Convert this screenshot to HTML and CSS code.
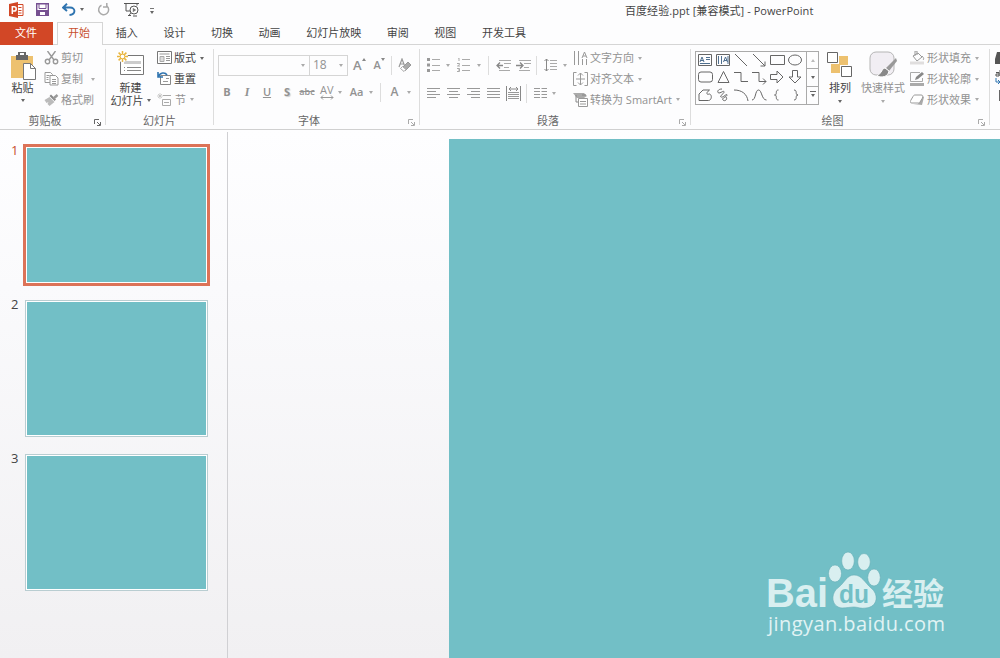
FILE: index.html
```html
<!DOCTYPE html>
<html lang="zh-CN">
<head>
	<meta charset="UTF-8">
	<title>百度经验.ppt [兼容模式] - PowerPoint</title>
	<link rel="stylesheet" href="styles.css">
</head>
<body>
<div class="app">
	<!-- 标题栏 -->
	<div class="titlebar">
		<div class="quick">
			<svg class="logo" width="15" height="16" viewBox="0 0 15 16"><path d="M8 2.500h6v11H8" fill="#fff" stroke="#d24726"/><path d="M9.500 5.500h3M9.500 8.500h3M9.500 11h3" stroke="#d24726"/><path d="M0 2l9-2v16l-9-2z" fill="#d24726"/><path d="M3.300 12V4.800h1.800a2 2 0 0 1 0 4.200H3.500" fill="none" stroke="#fff" stroke-width="1.500"/></svg>
			<svg class="save" width="13" height="13" viewBox="0 0 13 13"><path d="M.7.7h11.600v11.600H.7z" fill="#fff" stroke="#765091" stroke-width="1.400"/><path d="M.7 7h11.600v5.300H.7z" fill="#765091"/><path d="M3 .5v5h7v-5" fill="none" stroke="#765091"/><path d="M4 9h5v3H4z" fill="#fff"/></svg>
			<svg class="undo" width="14" height="13" viewBox="0 0 14 13"><path d="M5 .8L1 4.500 5 8M1.500 4.500H8c6 0 6 7-.5 7.500" fill="none" stroke="#2f74b0" stroke-width="1.900"/></svg>
			<i class="caret dark"></i>
			<svg class="redo" width="13" height="13" viewBox="0 0 13 13"><path d="M4.500 2.200A5 5 0 1 0 10 3M9.800 0v4H6" fill="none" stroke="#aaa" stroke-width="1.500"/></svg>
			<svg class="show" width="16" height="15" viewBox="0 0 16 15"><path d="M0 1.500h15M2 1.500V9h4M5 13.500l2-3M4 13.500h3M13 1.500v2" fill="none" stroke="#555"/><circle cx="10" cy="8" r="4" fill="#fff" stroke="#555"/><path d="M8.800 5.800v4.400L12.200 8z" fill="#777"/><path d="M9 14h4" stroke="#555"/></svg>
			<span class="more"><i class="caret dark"></i></span>
		</div>
		<div class="title">百度经验.ppt [兼容模式] - PowerPoint</div>
	</div>

	<!-- 选项卡 -->
	<div class="tabs">
		<span class="tab file">文件</span>
		<span class="tab current">开始</span>
		<span class="tab">插入</span>
		<span class="tab">设计</span>
		<span class="tab">切换</span>
		<span class="tab">动画</span>
		<span class="tab">幻灯片放映</span>
		<span class="tab">审阅</span>
		<span class="tab">视图</span>
		<span class="tab">开发工具</span>
	</div>

	<!-- 功能区 -->
	<div class="ribbon">
		<div class="group clipboard">
			<div class="group-body">
				<div class="big paste">
					<svg width="26" height="29" viewBox="0 0 26 29"><path d="M0 4h22v22H0z" fill="#edc16f"/><path d="M5 3h12v5H5z" fill="#666"/><path d="M8 3V0h6v3" fill="none" stroke="#666" stroke-width="2"/><path d="M12.500 11.500h7l5 5v11h-12z" fill="#fff" stroke="#777"/><path d="M19.500 11.500v5h5" fill="none" stroke="#777"/></svg>
					<span>粘贴</span>
					<i class="caret dark"></i>
				</div>
				<div class="list">
					<div class="cmd off"><svg width="14" height="14" viewBox="0 0 14 14"><g fill="none" stroke="#999" stroke-width="1.400"><path d="M3 0l6.500 9M11 0L4.500 9"/><circle cx="3" cy="10.500" r="2.200"/><circle cx="11" cy="10.500" r="2.200"/></g></svg><span>剪切</span></div>
					<div class="cmd off"><svg width="14" height="14" viewBox="0 0 14 14"><g fill="#fff" stroke="#999"><path d="M.5.5H6l2 2v8H.5z"/><path d="M5.500 3.500H11l2.500 2.500v7h-8z"/><path d="M2 3.500h3M2 5.500h2M2 7.500h2M7.500 7.500h4M7.500 9.500h4M7.500 11.500h4"/></g></svg><span>复制</span><i class="caret far"></i></div>
					<div class="cmd off"><svg width="14" height="14" viewBox="0 0 14 14"><path d="M0 7l5-3 5 5-5 4-2-2 1-2-2 1z" fill="#bbb"/><path d="M5 3l5 5 1.500-1.500-5-5z" fill="#888"/><path d="M9 5.500L13 2" stroke="#999" stroke-width="2.500"/></svg><span>格式刷</span></div>
				</div>
			</div>
			<div class="group-name">剪贴板<svg class="launch dark" width="7" height="7" viewBox="0 0 7 7"><path d="M.5 5V.5H5M3 3l3 3M6.500 3v3.500H3"/></svg></div>
		</div>

		<div class="group slides">
			<div class="group-body">
				<div class="big newslide">
					<svg width="28" height="25" viewBox="0 0 28 25"><path d="M3.500 4.500h23v19h-23z" fill="#fff" stroke="#777"/><path d="M7 10h17v3H7z" fill="#ccc"/><path d="M7 16.500h1M10 16.500h14M7 19.500h1M10 19.500h14" stroke="#888"/><circle cx="5.500" cy="5.500" r="5.500" fill="#fff"/><path d="M5.500 0v11M0 5.500h11M1.600 1.600l7.800 7.800M9.400 1.600L1.600 9.400" stroke="#e9b53f" stroke-width="1.500"/><circle cx="5.500" cy="5.500" r="2.300" fill="#fff" stroke="#e9b53f"/></svg>
					<span>新建</span>
					<span>幻灯片<i class="caret dark"></i></span>
				</div>
				<div class="list">
					<div class="cmd"><svg width="15" height="14" viewBox="0 0 15 14"><path d="M.5.5h14v12H.5z" fill="#fff" stroke="#777"/><path d="M2.500 3h10" stroke="#999"/><path d="M3 5.500h4v5H3z" fill="#ddd" stroke="#aaa"/><path d="M9 5.500h4M9 7.500h4M9 9.500h4" stroke="#999"/></svg><span>版式</span><i class="caret dark"></i></div>
					<div class="cmd"><svg width="15" height="14" viewBox="0 0 15 14"><path d="M3.500 3.500h10v9h-10z" fill="#fff" stroke="#888"/><path d="M6 9.500h5M9 6.500h3" stroke="#999"/><path d="M1 0v5h5M1.500 4.500C3 .5 8-.2 10 3" fill="none" stroke="#2f74b0" stroke-width="1.600"/></svg><span>重置</span></div>
					<div class="cmd off"><svg width="15" height="14" viewBox="0 0 15 14"><path d="M3 0v6M0 3h6M1 1l4 4M5 1L1 5" stroke="#bbb" stroke-width=".7"/><path d="M6 2.500h8M5.500 6.500h8v6h-8zM7 9.500h5" fill="none" stroke="#aaa"/></svg><span class="sec">节</span><i class="caret"></i></div>
				</div>
			</div>
			<div class="group-name">幻灯片</div>
		</div>

		<div class="group font">
			<div class="group-body rows">
				<div class="font-top">
					<div class="combo"><i class="caret"></i></div>
					<div class="combo size">18<i class="caret"></i></div>
					<b class="grow">A<svg width="4" height="3" viewBox="0 0 4 3"><path d="M0 3l2-3 2 3z" fill="#888"/></svg></b>
					<b class="shrink">A<svg width="4" height="3" viewBox="0 0 4 3"><path d="M0 0l2 3 2-3z" fill="#888"/></svg></b>
					<i class="sep"></i>
					<svg class="clear" width="14" height="14" viewBox="0 0 14 14"><path d="M1 9l3-8 3 8M2.300 6h3.500" fill="none" stroke="#999" stroke-width="1.200"/><path d="M4 10l6-6 3 3-6 6z" fill="#aaa" stroke="#999"/><path d="M2.500 10.500l2-2 3.500 3-2 2z" fill="#fff" stroke="#aaa"/></svg>
				</div>
				<div class="font-bottom">
					<b>B</b><em>I</em><u>U</u><b class="shade">S</b><s>abc</s>
					<span class="av">AV<svg width="14" height="5" viewBox="0 0 14 5"><path d="M1 2.500h12M3 .5l-2 2 2 2M11 .5l2 2-2 2" fill="none" stroke="#999"/></svg></span>
					<i class="caret"></i><span class="aa">Aa</span><i class="caret"></i><i class="sep"></i><b class="color">A</b><i class="caret"></i>
				</div>
			</div>
			<div class="group-name">字体<svg class="launch" width="7" height="7" viewBox="0 0 7 7"><path d="M.5 5V.5H5M3 3l3 3M6.500 3v3.500H3"/></svg></div>
		</div>

		<div class="group para">
			<div class="group-body">
				<div class="rows">
					<div class="para-top">
						<svg width="13" height="14" viewBox="0 0 13 14"><path d="M0 0h3v3H0zM0 5.500h3v3H0zM0 11h3v3H0z" fill="#999"/><path d="M5 1.500h8M5 7.500h8M5 12.500h8" stroke="#aaa"/></svg>
						<i class="caret"></i>
						<svg width="13" height="14" viewBox="0 0 13 14"><path d="M1 0h1v3M0 5.500h2.500v1L.5 8H3M0 10.500h2.500v3H0M1 12h1.500M5 1.500h8M5 7.500h8M5 12.500h8" fill="none" stroke="#aaa"/></svg>
						<i class="caret"></i><i class="sep"></i>
						<svg width="15" height="11" viewBox="0 0 15 11"><path d="M3 .5h12M8 3.500h7M8 7.500h5M3 10.500h11" stroke="#aaa"/><path d="M4 2.500l-3 3 3 3M1 5.500h6" fill="none" stroke="#888" stroke-width="1.300"/></svg>
						<svg width="15" height="11" viewBox="0 0 15 11"><path d="M3 .5h12M8 3.500h7M8 7.500h5M3 10.500h11" stroke="#aaa"/><path d="M4 2.500l3 3-3 3M0 5.500h6" fill="none" stroke="#888" stroke-width="1.300"/></svg>
						<i class="sep"></i>
						<svg width="13" height="14" viewBox="0 0 13 14"><path d="M2.500 1v12M.5 3l2-2 2 2M.5 11l2 2 2-2" fill="none" stroke="#888"/><path d="M6 2.500h7M6 5.500h7M6 8.500h7M6 11.500h7" stroke="#aaa"/></svg>
						<i class="caret"></i>
					</div>
					<div class="para-bottom">
						<svg width="13" height="10" viewBox="0 0 13 10"><path d="M0 .5h13M0 3.500h9M0 6.500h13M0 9.500h9" stroke="#999"/></svg>
						<svg width="13" height="10" viewBox="0 0 13 10"><path d="M0 .5h13M2 3.500h9M0 6.500h13M2 9.500h9" stroke="#999"/></svg>
						<svg width="13" height="10" viewBox="0 0 13 10"><path d="M0 .5h13M4 3.500h9M0 6.500h13M4 9.500h9" stroke="#999"/></svg>
						<svg width="13" height="10" viewBox="0 0 13 10"><path d="M0 .5h13M0 3.500h13M0 6.500h13M0 9.500h13" stroke="#999"/></svg>
						<svg width="15" height="15" viewBox="0 0 15 15"><path d="M.5 0v15M14.500 0v15" stroke="#888"/><path d="M3 3h9M5 1L3 3l2 2M10 1l2 2-2 2" fill="none" stroke="#888"/><path d="M2 6.500h11M2 8.500h11M2 10.500h11M2 12.500h11" stroke="#999"/></svg>
						<i class="sep"></i>
						<svg width="13" height="10" viewBox="0 0 13 10"><path d="M0 .5h6M0 3.500h6M0 6.500h6M0 9.500h6M7.500.5H13M7.500 3.500H13M7.500 6.500H13M7.500 9.500H13" stroke="#999"/></svg>
						<i class="caret"></i>
					</div>
				</div>
				<div class="list">
					<div class="cmd off"><svg width="15" height="14" viewBox="0 0 15 14"><path d="M1.500 0v14M5.500 0v14M9.500 8v6M13.500 8v6M9 7l2.500-6L14 7M10 5h3" fill="none" stroke="#999"/></svg><span>文字方向</span><i class="caret"></i></div>
					<div class="cmd off"><svg width="15" height="14" viewBox="0 0 15 14"><path d="M3.500.5h-3v13h3M11.500.5h3v13h-3M3 7h9" fill="none" stroke="#999"/><path d="M7.500 1v12M5 3.500L7.500 1 10 3.500M5 10.500L7.500 13l2.500-2.500" fill="none" stroke="#999"/></svg><span>对齐文本</span><i class="caret"></i></div>
					<div class="cmd off"><svg width="15" height="15" viewBox="0 0 15 15"><path d="M0 1h11l3 3-3 2H4z" fill="#aaa"/><path d="M3 3v7h3M9 3h4" fill="none" stroke="#888"/><path d="M5.500 6.500h9v8h-9z" fill="#fff" stroke="#999"/><path d="M7 9.500h6M7 12h6" stroke="#999"/></svg><span class="smart">转换为 SmartArt</span><i class="caret"></i></div>
				</div>
			</div>
			<div class="group-name">段落<svg class="launch" width="7" height="7" viewBox="0 0 7 7"><path d="M.5 5V.5H5M3 3l3 3M6.500 3v3.500H3"/></svg></div>
		</div>

		<div class="group draw">
			<div class="group-body">
				<div class="gallery">
					<div class="shapes">
						<svg viewBox="0 0 16 16"><path d="M1.500 2.500h13v11h-13z"/><path d="M3 10l2-5 2 5M3.500 8.500h3M9 5.500h4M9 7.500h4M3 11.500h10" stroke="#4f6f8f"/></svg>
						<svg viewBox="0 0 16 16"><path d="M1.500 2.500h13v11h-13z"/><path d="M3.500 4v8M6.500 4v8M8.500 10l2-5 2 5M9 8.500h3M13 4v8" stroke="#4f6f8f"/></svg>
						<svg viewBox="0 0 16 16"><path d="M2 2l12 12"/></svg>
						<svg viewBox="0 0 16 16"><path d="M2 2l12 12M14 9.500V14H9.500"/></svg>
						<svg viewBox="0 0 16 16"><path d="M1.500 3.500h14v9h-14z"/></svg>
						<svg viewBox="0 0 16 16"><ellipse cx="8" cy="8" rx="6.500" ry="5"/></svg>
						<svg viewBox="0 0 16 16"><rect x="1.500" y="3" width="14" height="10" rx="2.500"/></svg>
						<svg viewBox="0 0 16 16"><path d="M8.500 2.500l5.500 11H3z"/></svg>
						<svg viewBox="0 0 16 16"><path d="M1 3.500h7v9h7"/></svg>
						<svg viewBox="0 0 16 16"><path d="M1 3.500h7v9h7M12 9.500l3 3-3 3"/></svg>
						<svg viewBox="0 0 16 16"><path d="M1.500 5.500h6.500v-3.500l6 6-6 6v-3.500H1.500z"/></svg>
						<svg viewBox="0 0 16 16"><path d="M5.500 1.500h5v6.500h3.500l-6 6-6-6h3.500z"/></svg>
						<svg viewBox="0 0 16 16"><path d="M2 13.500V7l4-4h6.500c-4 3-3 5 0 4 3 1 2 6.500-1 6.500z"/></svg>
						<svg viewBox="0 0 16 16"><path d="M7 2C2 2 2 6 4 6s5-3 5-1-5 4-3 5 6-4 6-2-6 3-4 5 5-1 3-3"/></svg>
						<svg viewBox="0 0 16 16"><path d="M1 3c8 0 13 4 14 11"/></svg>
						<svg viewBox="0 0 16 16"><path d="M1 13c4 0 3-10 6.500-10s3 10 8 10"/></svg>
						<svg viewBox="0 0 16 16"><path d="M9.500 3C5.500 3 9 8 5.500 8 9 8 5.500 13 9.500 13"/></svg>
						<svg viewBox="0 0 16 16"><path d="M7 3c4 0 .5 5 4 5-3.500 0 0 5-4 5"/></svg>
					</div>
					<div class="scroll"><span><i class="caret up"></i></span><span><i class="caret dark"></i></span><span class="more"><i class="caret dark"></i></span></div>
				</div>
				<div class="big arrange">
					<svg width="26" height="26" viewBox="0 0 26 26"><path d="M12 4h9v9h-9zM4 12h9v9H4z" fill="#edc16f"/><path d="M.5.5h10v10H.5zM14.500 14.500h10v10h-10z" fill="#fff" stroke="#666"/></svg>
					<span>排列</span><i class="caret dark"></i>
				</div>
				<div class="big styles off">
					<svg width="30" height="28" viewBox="0 0 30 28"><rect x="2" y="1" width="24" height="23" rx="6" fill="#f1eef3" stroke="#b5b5b5"/><path d="M28 7L18 17l3 3 8-10z" fill="#999"/><path d="M17 17c-3 0-3 5-8 8 5 2 11 1 12-5z" fill="#888" stroke="#fff"/></svg>
					<span>快速样式</span><i class="caret"></i>
				</div>
				<div class="list">
					<div class="cmd off"><svg width="15" height="14" viewBox="0 0 15 14"><path d="M3 5l5-3 4 4-5 4zM5 5V0h2v4M12 5c2 2 2 3 1 4" fill="none" stroke="#999"/><path d="M0 10.500h14v3H0z" fill="#e0dede"/></svg><span>形状填充</span><i class="caret"></i></div>
					<div class="cmd off"><svg width="15" height="14" viewBox="0 0 15 14"><path d="M10 .5H.5v9h12V6" fill="none" stroke="#aaa"/><path d="M5 8l1-3 6-5 2 2-6 5z" fill="#888"/><path d="M0 11h14v3H0z" fill="#aaa"/></svg><span>形状轮廓</span><i class="caret"></i></div>
					<div class="cmd off"><svg width="15" height="14" viewBox="0 0 15 14"><path d="M3 11l9 1 2-8-2-1-4 8z" fill="#aaa"/><path d="M5 2h6c2 0 2 1 1.500 3L10 9c-.5 1-1 1-2 1H2C0 10 0 9 .7 7.500L3 3.500C3.500 2.500 4 2 5 2z" fill="#fff" stroke="#999"/></svg><span>形状效果</span><i class="caret"></i></div>
				</div>
			</div>
			<div class="group-name">绘图<svg class="launch" width="7" height="7" viewBox="0 0 7 7"><path d="M.5 5V.5H5M3 3l3 3M6.500 3v3.500H3"/></svg></div>
		</div>

		<div class="group edit">
			<svg width="14" height="14" viewBox="0 0 14 14"><path d="M2 1h3v4h3v8H0V8z" fill="#555"/></svg>
			<svg width="14" height="14" viewBox="0 0 14 14"><path d="M1 2.500h3V6H1V4h3M5 0v6" fill="none" stroke="#555"/><path d="M1 8v4h4M3 10l2 2-2 2" fill="none" stroke="#2f74b0"/></svg>
			<svg width="14" height="14" viewBox="0 0 14 14"><path d="M4.500 1v11l3-3" fill="none" stroke="#666"/></svg>
		</div>
	</div>

	<!-- 工作区 -->
	<div class="work">
		<div class="thumbs">
			<div class="thumb current"><span>1</span><div class="page"></div></div>
			<div class="thumb"><span>2</span><div class="page"></div></div>
			<div class="thumb"><span>3</span><div class="page"></div></div>
		</div>
		<div class="stage">
			<div class="slide">
				<svg class="watermark" width="190" height="96" viewBox="0 0 190 96">
					<g fill="#d9eff0" stroke="#66adb5" stroke-width=".6">
						<ellipse cx="74" cy="23.500" rx="6.500" ry="8.500"/>
						<ellipse cx="87" cy="11" rx="6.300" ry="9"/>
						<ellipse cx="103" cy="12" rx="6.300" ry="8.500"/>
						<ellipse cx="113" cy="27.500" rx="6.300" ry="8.500"/>
						<path d="M93 25c-7 0-9 7-15 12-9 6-8 20 3 21 5 0 8-1 12-1s7 2 12 1c12-1 13-14 5-20-6-5-9-13-17-13z"/>
					</g>
					<g class="brand">
						<text x="5" y="57" font-size="40" textLength="62" lengthAdjust="spacingAndGlyphs">Bai</text>
						<text class="du" x="78" y="53" font-size="26" textLength="30" lengthAdjust="spacingAndGlyphs">du</text>
						<text class="cjk" x="121" y="55" font-size="31" textLength="62" lengthAdjust="spacingAndGlyphs">经验</text>
					</g>
					<text class="site" x="7" y="81" font-size="20" textLength="177">jingyan.baidu.com</text>
				</svg>
			</div>
		</div>
	</div>
</div>
</body>
</html>
```
FILE: styles.css
```css
*{
	margin: 0;
	padding: 0;
	box-sizing: border-box;
}
body{
	width: 1000px;
	height: 658px;
	overflow: hidden;
	font: 11px/14px "Open Sans", "Noto Sans CJK SC", sans-serif;
	color: #444;
	background: #fdfdfe;
}
svg{
	display: block;
	flex: none;
}
.app{
	display: flex;
	flex-direction: column;
	height: 658px;
}
.caret{
	display: block;
	flex: none;
	width: 0;
	height: 0;
	border: 2.5px solid transparent;
	border-top: 3px solid #aaa;
	border-bottom: 0;
}
.caret.dark{
	border-top-color: #666;
}
.caret.up{
	border-top: 0;
	border-bottom: 3px solid #bbb;
}
.sep{
	width: 1px;
	height: 19px;
	background: #ddd;
}

/* 标题栏 */
.titlebar{
	display: flex;
	height: 22px;
}
.quick{
	display: flex;
	align-items: center;
	width: 625px;
	height: 19px;
	padding-left: 9px;
}
.quick .save{ margin-left: 12px; }
.quick .undo{ margin-left: 13px; }
.quick .undo + .caret{ margin-left: 4px; }
.quick .redo{ margin-left: 13px; }
.quick .show{ margin-left: 14px; }
.more{
	border-top: 1px solid #777;
	padding-top: 2px;
}
.quick .more{ margin: 2px 0 0 10px; }
.title{
	line-height: 21px;
	white-space: nowrap;
	letter-spacing: 0.06px;
}

/* 选项卡 */
.tabs{
	display: flex;
	height: 23px;
	border-bottom: 1px solid #d5d5d5;
}
.tab{
	height: 23px;
	line-height: 22px;
	padding: 0 12.8px;
}
.tab.file{
	width: 53px;
	padding: 0 15px;
	color: #fff;
	background: #d24726;
}
.tab.current{
	width: 46px;
	margin: 0 0 0 4px;
	padding: 0 10px;
	color: #c8502f;
	border: 1px solid #d5d5d5;
	border-bottom: 0;
	background: #fdfdfe;
	line-height: 20px;
}

/* 功能区 */
.ribbon{
	display: flex;
	height: 85px;
	border-bottom: 1px solid #d0d0d0;
}
.group{
	display: flex;
	flex-direction: column;
	flex: none;
	position: relative;
	background: linear-gradient(#ddd, #ddd) right 4px / 1px 76px no-repeat;
}
.group-body{
	display: flex;
	height: 68px;
}
.group-name{
	position: relative;
	height: 15px;
	line-height: 15px;
	text-align: center;
	color: #666;
}
.launch{
	position: absolute;
	right: 5px;
	top: 6px;
	fill: none;
	stroke: #aaa;
}
.launch.dark{ stroke: #666; }
.off{ color: #929292; }
.big{
	display: flex;
	flex-direction: column;
	align-items: center;
	white-space: nowrap;
}
.list{
	display: flex;
	flex-direction: column;
	padding-top: 3px;
}
.cmd{
	display: flex;
	align-items: center;
	height: 20.7px;
	white-space: nowrap;
}
.cmd svg{ width: 15px; margin-right: 2px; }
.cmd .caret{ margin-left: 4px; }

.clipboard{ width: 106px; }
.clipboard .group-name{ padding-right: 16px; }
.paste{
	width: 33px;
	margin-left: 6px;
	padding: 7px 0 0 2px;
}
.paste span{ margin-left: -2px; }
.paste .caret{ margin: 4px 0 0 -1px; }
.clipboard .list{ margin-left: 5px; }
.cmd .far{ margin-left: 8px; }

.slides{ width: 108px; }
.slides .group-name{ padding-right: 1px; }
.newslide{
	width: 45px;
	margin-left: 2px;
	padding-top: 6px;
}
.newslide span{
	display: flex;
	align-items: center;
	height: 13px;
}
.newslide svg + span{ margin-top: 5px; }
.newslide .caret{ margin-left: 3px; }
.slides .list{ margin-left: 4px; }
.sec{ margin-left: 1px; }

.font{ width: 206px; }
.font .group-name{ padding-right: 16px; }
.rows{
	display: flex;
	flex-direction: column;
	color: #929292;
}
.font-top{
	display: flex;
	align-items: center;
	height: 20px;
	margin: 10px 0 0 4px;
}
.combo{
	display: flex;
	justify-content: flex-end;
	align-items: center;
	width: 92px;
	height: 21px;
	padding-right: 4px;
	border: 1px solid #d5d5d5;
}
.combo.size{
	justify-content: space-between;
	width: 39px;
	margin-left: -1px;
	padding-left: 3px;
	font-size: 12px;
}
.grow, .shrink{
	display: flex;
	font-weight: 600;
	font-size: 13px;
	margin-left: 5px;
}
.shrink{
	font-size: 11px;
	margin-left: 8px;
}
.font-top .sep{ margin-left: 6px; }
.clear{ margin-left: 6px; }
.font-bottom{
	display: grid;
	grid-template-columns: repeat(6, 20px) 6px 27px 1px 18px 11px 18px;
	align-items: center;
	justify-items: center;
	height: 20px;
	margin: 7px 0 0 3px;
}
.font-bottom em{
	font: italic bold 12px "Liberation Serif", serif;
}
.font-bottom u{ font-weight: 600; }
.font-bottom s{ font-size: 9px; font-weight: 600; }
.shade{ text-shadow: 1px 1px 1px #ccc; }
.av{ line-height: 10px; }
.aa, .color{ font-size: 12px; font-weight: 600; }
.aa{ font-size: 11px; }

.para{ width: 271px; }
.para .group-name{ padding-right: 15px; }
.para .rows{ width: 150px; }
.para-top{
	display: grid;
	grid-template-columns: 26px 4px 27px 4px 14px 16px 24px 2px 27px 1px;
	align-items: center;
	justify-items: center;
	height: 20px;
	margin-top: 10px;
}
.para-bottom{
	display: grid;
	grid-template-columns: 26px 14px 26px 14px 26px 1px 26px 1px;
	align-items: center;
	justify-items: center;
	height: 20px;
	margin-top: 8px;
}
.para .list{ margin-left: 3px; }
.smart{ letter-spacing: 0; }

.draw{ width: 299px; }
.draw .group-name{ padding-right: 16px; }
.gallery{
	display: flex;
	width: 124px;
	height: 54px;
	margin: 6px 0 0 4px;
	border: 1px solid #aaa;
}
.shapes{
	display: grid;
	grid-template-columns: repeat(6, 18px);
	grid-template-rows: 15.5px 18.5px 18px;
	align-items: center;
	width: 110px;
	padding-left: 1px;
}
.shapes svg{
	width: 16px;
	height: 16px;
	fill: none;
	stroke: #666;
}
.scroll{
	width: 12px;
	border-left: 1px solid #aaa;
}
.scroll > span{
	display: flex;
	align-items: center;
	justify-content: center;
	height: 17.3px;
	border-bottom: 1px solid #aaa;
}
.scroll > .more{
	border: 0;
	padding: 0;
}
.scroll .more .caret{
	position: relative;
}
.scroll .more .caret::before{
	content: "";
	position: absolute;
	left: -3px;
	top: -6px;
	width: 6px;
	height: 1px;
	background: #666;
}
.arrange{
	width: 32px;
	margin-left: 5px;
	padding-top: 7px;
}
.arrange span{ margin-top: 3px; }
.big.arrange .caret, .styles .caret{ margin-top: 5px; }
.styles{
	width: 46px;
	margin-left: 4px;
	padding-top: 6px;
}
.styles span{ margin-top: 2px; }
.draw .list{ margin-left: 4px; }

.edit{
	gap: 5px;
	padding: 6px 0 0 5px;
	background: none;
}

/* 工作区 */
.work{
	display: flex;
	flex: 1;
	background: linear-gradient(#fefeff, #fafafc 30%, #f1f0f2);
}
.thumbs{
	width: 228px;
	padding-top: 15px;
	background: linear-gradient(#d0d0d3, #d0d0d3) right 2px / 1px 530px no-repeat;
}
.thumb{
	display: flex;
	height: 154px;
	padding-left: 11px;
}
.thumb span{
	width: 13px;
	margin-top: -1px;
	font-size: 13px;
	line-height: 12px;
}
.thumb .page{
	width: 183px;
	height: 137px;
	margin: 1px 0 0 1px;
	background: #72bfc6;
	border: 1px solid #b9cdd1;
	box-shadow: inset 0 0 0 1px #fff;
}
.thumb.current span{ color: #c8502f; }
.thumb.current .page{
	width: 187px;
	height: 142px;
	margin: -1px 0 0 -1px;
	border: 3px solid #dc7358;
}
.stage{
	flex: 1;
	padding: 9px 0 0 221px;
}
.slide{
	position: relative;
	height: 519px;
	background: #72bfc6;
}
/* 右下角水印 */
.watermark{
	position: absolute;
	right: 49px;
	bottom: 12px;
	overflow: visible;
}
.brand{
	font-family: "Liberation Sans", sans-serif;
	font-weight: bold;
	fill: #d9eff0;
}
.brand .du{ fill: #72bfc6; }
.brand .cjk{ font-family: "Noto Sans CJK SC", sans-serif; }
.site{
	font-family: "Open Sans", sans-serif;
	fill: #e1f3f4;
}
```
